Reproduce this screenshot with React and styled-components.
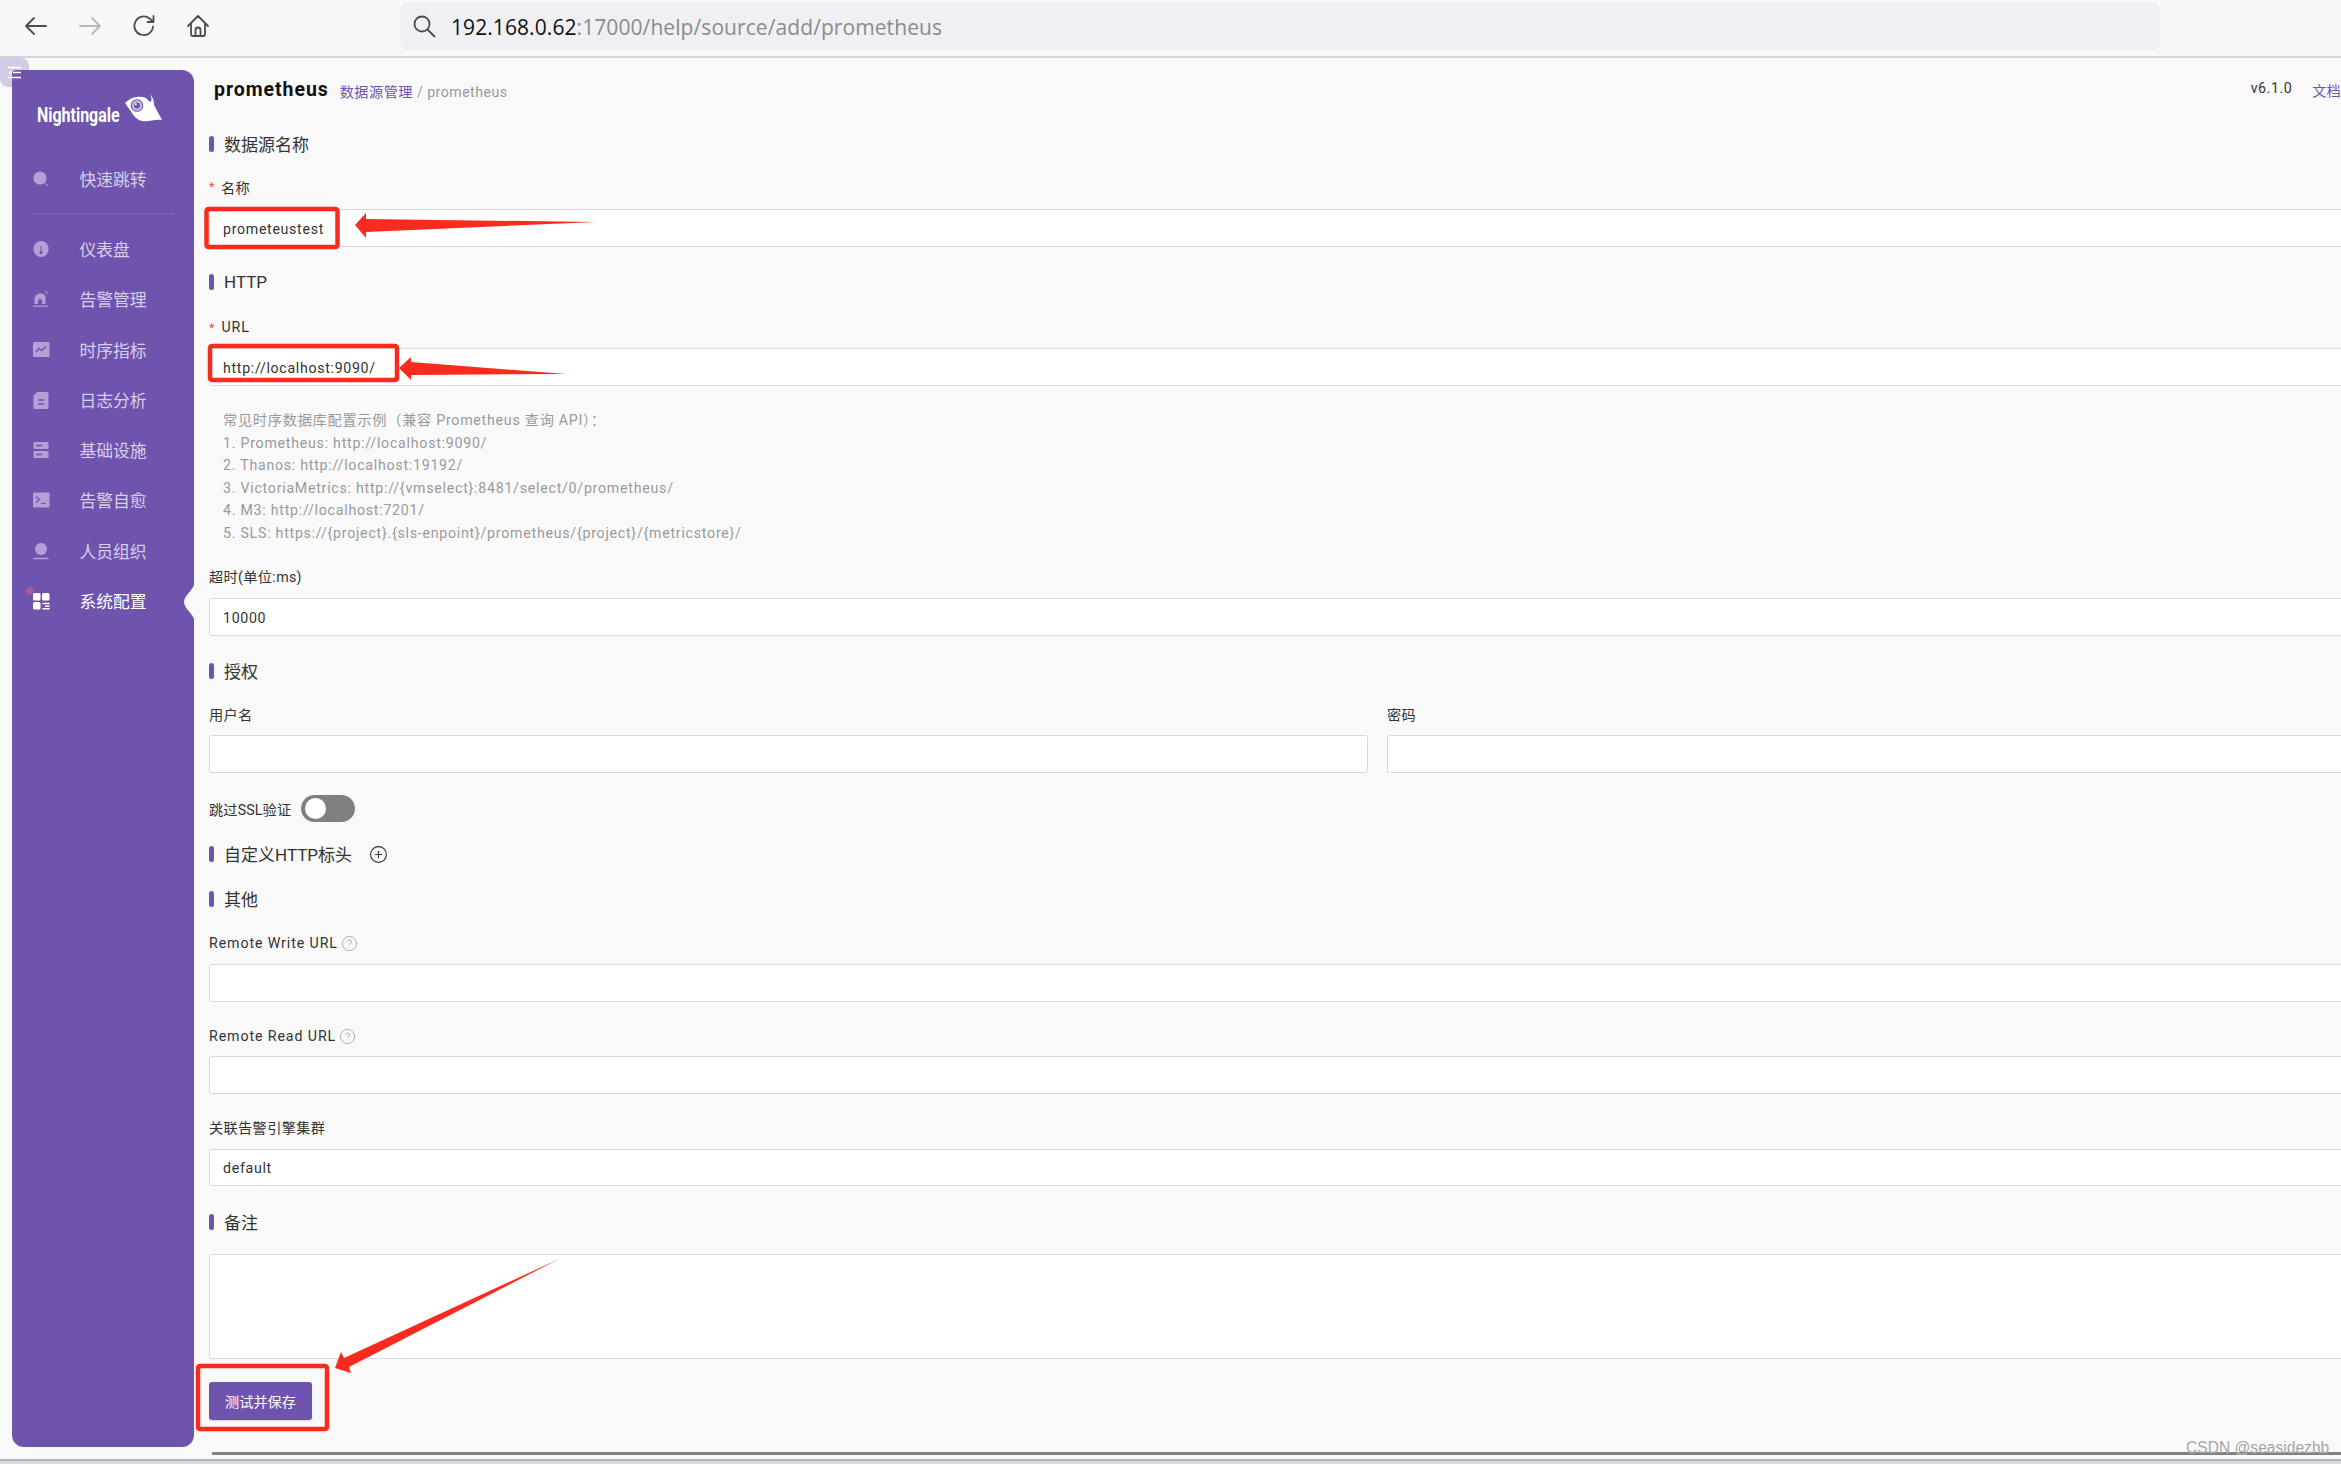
import React from "react";
import styled, { createGlobalStyle } from "styled-components";
import { CirclePlus, CircleHelp } from "lucide-react";

const Global = createGlobalStyle`
  html, body { margin: 0; padding: 0; background: #f9f9f9; }
  * { box-sizing: border-box; }
  body { font-family: Roboto, "Noto Sans CJK SC", sans-serif; color: #333; }
`;

const Page = styled.div`
  position: relative; width: 2341px; height: 1464px; overflow: hidden; background: #f9f9f9;
`;
const BrowserBar = styled.header`
  display: flex; align-items: center; height: 58px; padding: 0 0 4px 24px; gap: 30px;
  background: #f8f8fb; border-bottom: 2px solid #d4d3d8;
`;
const NavIcon = styled.svg`
  width: 24px; height: 24px; fill: none; stroke: ${p => p.$off ? "#b9b9bd" : "#4c4c50"}; stroke-width: 1.8;
  stroke-linecap: round; stroke-linejoin: round; flex: none;
`;
const UrlBar = styled.div`
  display: flex; align-items: center; gap: 15px; margin-left: 160px; width: 1760px; height: 48px; padding-left: 12px;
  background: #f0f0f4; border-radius: 8px; font: 400 21px "Open Sans", "Noto Sans", sans-serif; letter-spacing: .08px; color: #8a8a8e;
`;
const UrlHost = styled.span` color: #111; `;
const UrlText = styled.span` padding-top: 2px; `;
const Body = styled.div`
  position: relative; display: flex; height: 1401px; align-items: flex-start; background: #f9f9f9;
`;
const CollapseTab = styled.div`
  position: absolute; left: 0; top: 0; width: 29px; height: 29px; background: #d3cbe6; border-radius: 0 8px 8px 8px;
`;
const CollapseIcon = styled.svg`
  position: absolute; left: 7px; top: 8px; width: 15px; height: 13px; z-index: 3; stroke: #fff; stroke-width: 1.6; fill: none;
`;
const Sidebar = styled.nav`
  position: relative; z-index: 1; flex: none; width: 182px; height: 1377px; margin: 12px 15px 0 12px;
  background: #6f54ae; border-radius: 0 12px 12px 12px; border-top-left-radius: 4px;
`;
const Logo = styled.div`
  position: relative; display: flex; height: 84px; padding: 32px 0 0 25px;
`;
const LogoText = styled.span`
  font: 700 21px/26px Roboto, sans-serif; color: #fff; transform: scaleX(.76); transform-origin: left center; white-space: nowrap;
`;
const LogoMark = styled.svg`
  position: absolute; left: 113px; top: 24px; width: 38px; height: 30px; overflow: visible;
`;
const MenuRow = styled.div`
  display: flex; align-items: center; height: 50.3px; padding-left: 20px; gap: 29.5px;
  font-size: 16.8px; color: ${p => p.$active ? "#fff" : "#d8d0e8"};
`;
const MenuIcon = styled.svg`
  width: 18px; height: 18px; flex: none; fill: ${p => p.$active ? "#fff" : "#b3a0d6"}; 
`;
const Divider = styled.div`
  height: 1px; margin: 9px 19px 9.5px; background: #7e63c4;
`;
const ActiveDot = styled.span`
  position: absolute; left: 14px; top: 517px; width: 8px; height: 8px; border-radius: 50%; background: #a9599a;
`;
const Notch = styled.svg`
  position: absolute; right: 0; top: 515px; width: 10px; height: 34px; fill: #f9f9f9;
`;
const Main = styled.main`
  flex: 1; min-width: 0; height: 100%; overflow: hidden;
`;
const Header = styled.div`
  position: relative; display: flex; align-items: center; width: 2132px; height: 64px; padding: 0 0 1px 5px;
`;
const Title = styled.h1`
  margin: 0 11px 0 0; font: 700 19.5px Roboto, sans-serif; color: #111; letter-spacing: .95px;
`;
const Crumb = styled.span`
  font-size: 14.2px; color: #999; letter-spacing: .45px; padding-top: 2px;
`;
const CrumbLink = styled.span` color: #6f54ae; `;
const HeaderRight = styled.div`
  margin-left: auto; display: flex; gap: 20px; font-size: 14.2px; color: #333; letter-spacing: .55px; white-space: nowrap;
`;
const DocLink = styled.span` color: #6f54ae; letter-spacing: .2px; `;
const Form = styled.div` width: 2300px; `;
const Section = styled.h2`
  display: flex; align-items: center; gap: 10px; height: 26px; margin: ${p => p.$top}px 0 0;
  padding-bottom: ${p => p.$latin ? 0 : 2}px;
  font: 400 17px Roboto, "Noto Sans CJK SC", sans-serif; color: #333; letter-spacing: 0;
  &::before { content: ""; width: 5px; height: 16px; border-radius: 3px; background: #6f54ae; transform: translateY(${p => p.$latin ? 0 : 1}px); }
`;
const Label = styled.label`
  display: flex; align-items: center; height: 20px; margin-top: ${p => p.$top}px;
  padding-bottom: ${p => p.$latin ? 0 : 3}px;
  font-size: 14.2px; color: #333; letter-spacing: ${p => p.$latin ? ".9px" : ".35px"};
`;
const Star = styled.span` color: #ff4d4f; margin-right: 6px; font-size: 13px; `;
const Help = styled(CircleHelp)` margin-left: 3px; color: #999; `;
const TextBox = styled.div`
  display: flex; align-items: center; height: ${p => p.$h || 38}px; margin-top: ${p => p.$top}px; padding: 1px 13px 0;
  background: #fff; border: 1px solid #d9d9d9; border-radius: 3px;
  font-size: 14.2px; color: #333; letter-spacing: .68px;
`;
const Hint = styled.div`
  margin-top: 23px; padding-left: 14px; font-size: 14.2px; line-height: 22.5px; color: #999; letter-spacing: .74px;
`;
const HintLine = styled.div` white-space: nowrap; `;
const TwoCols = styled.div`
  display: grid; grid-template-columns: 1159px 1fr; column-gap: 19px;
`;
const SwitchRow = styled.div`
  display: flex; align-items: center; gap: 10px; margin-top: 22px; height: 27px; font-size: 14.2px; letter-spacing: .15px; color: #333;
`;
const SwitchTrack = styled.span`
  position: relative; width: 54px; height: 27px; border-radius: 14px; background: #808080;
  &::after { content: ""; position: absolute; left: 4px; top: 3px; width: 21px; height: 21px; border-radius: 50%; background: #fff; }
`;
const AddIcon = styled(CirclePlus)` margin-left: 7px; color: #333; transform: translateY(1px); `;
const SaveButton = styled.button`
  display: block; width: 103px; height: 38px; margin-top: 23px; border: 0; border-radius: 3px;
  background: #6f54ae; color: #fff; font: 400 14.2px Roboto, "Noto Sans CJK SC", sans-serif; box-shadow: 0 1px 2px rgba(0,0,0,.15);
`;
const ScrollThumb = styled.div`
  height: 3px; margin: 32px 0 0 3px; background: #808080; width: 2300px;
`;
const BottomStrip = styled.div`
  height: 5px; background: linear-gradient(#b4b4b4 0 2px, #d3dadd 2px);
`;
const Annotations = styled.svg`
  position: absolute; left: 0; top: 0; width: 2341px; height: 1464px; z-index: 5; pointer-events: none;
`;
const Watermark = styled.div`
  position: absolute; left: 2186px; top: 1439px; z-index: 6; font: 400 15.6px "Liberation Sans", sans-serif; color: #a4a4a4;
  text-shadow: 0 0 1px #fff;
`;

const menu = [
  ["快速跳转", <><circle cx="8" cy="8" r="6.6" /><path d="M12.5 12.5l3.5 3.5" stroke="#b3a0d6" strokeWidth="1" /></>],
  "divider",
  ["仪表盘", <><path d="M9 1a7.6 8 0 0 1 7.6 8 7.6 8 0 0 1-15.2 0A7.6 8 0 0 1 9 1z" /><path d="M9 6v6" stroke="#6f54ae" strokeWidth="1" /><circle cx="9" cy="12.5" r="1.5" fill="#6f54ae" /></>],
  ["告警管理", <><path d="M2.5 14V9a6 6 0 0 1 11 -3V14h-3.5v-3a2 2 0 0 0-4 0v3z" /><path d="M1 16.2h15" stroke="#b3a0d6" strokeWidth="1.2" /><path d="M12.5 1a5 5 0 0 1 3.5 3" fill="none" stroke="#b3a0d6" /></>],
  ["时序指标", <><rect x="1" y="1" width="16.5" height="15" rx="1.2" /><path d="M4 11l3-3.5 2.5 2L14 5.5" fill="none" stroke="#6f54ae" strokeWidth="1.4" /></>],
  ["日志分析", <><path d="M5 1h10a1.5 1.5 0 0 1 1.5 1.5v14a1.5 1.5 0 0 1-1.5 1.5H3A1.5 1.5 0 0 1 1.500 16.500V5z" /><path d="M6 9h6M6 13h6" stroke="#6f54ae" strokeWidth="1.3" /></>],
  ["基础设施", <><rect x="1.500" y="1" width="15" height="7" rx="1" /><rect x="1.500" y="10" width="15" height="7" rx="1" /><path d="M4 4.500h6M4 13.500h6" stroke="#6f54ae" strokeWidth="1.300" /></>],
  ["告警自愈", <><rect x="1" y="1.500" width="16.500" height="15" rx="1" /><path d="M4 5.500l3.500 3-3.500 3M9 12.500h5" fill="none" stroke="#6f54ae" strokeWidth="1.200" /></>],
  ["人员组织", <><circle cx="9" cy="7" r="6" /><path d="M1.500 16.500h15" stroke="#b3a0d6" strokeWidth="1.500" /></>],
  ["系统配置", <><rect x="1" y="1" width="7.500" height="7.500" rx="1.500" /><rect x="10" y="1" width="7.500" height="7.500" rx="1.500" /><rect x="1" y="10" width="7.500" height="7.500" rx="1.500" /><path d="M10.500 10.700h7v1.600h-7zM13 13.500h4.500v1.600H13zM10.500 16h7v1.600h-7z" /></>, true],
];

const hints = [
  "1. Prometheus: http://localhost:9090/",
  "2. Thanos: http://localhost:19192/",
  "3. VictoriaMetrics: http://{vmselect}:8481/select/0/prometheus/",
  "4. M3: http://localhost:7201/",
  "5. SLS: https://{project}.{sls-enpoint}/prometheus/{project}/{metricstore}/",
];

export default function App() {
  return (
    <Page>
      <Global />
      <BrowserBar>
        <NavIcon viewBox="0 0 24 24"><path d="M2 12h20M10 4l-8 8 8 8" /></NavIcon>
        <NavIcon viewBox="0 0 24 24" $off><path d="M2 12h20M14 4l8 8-8 8" /></NavIcon>
        <NavIcon viewBox="0 0 24 24"><path d="M21 12.500A9.300 9.300 0 1 1 17.500 4.500L21 7.500M21.500 2v6h-6" /></NavIcon>
        <NavIcon viewBox="0 0 24 24"><path d="M2 12L12 2l10 10M5 9.500V20a2 2 0 0 0 2 2h10a2 2 0 0 0 2-2V9.500M9.500 22v-6a2.500 2.500 0 0 1 5 0v6" /></NavIcon>
        <UrlBar>
          <NavIcon viewBox="0 0 24 24"><circle cx="10" cy="10" r="7.500" /><path d="M15.500 15.500l7 7" /></NavIcon>
          <UrlText><UrlHost>192.168.0.62</UrlHost>:17000/help/source/add/prometheus</UrlText>
        </UrlBar>
      </BrowserBar>
      <Body>
        <CollapseTab />
        <CollapseIcon viewBox="0 0 15 13"><path d="M1 1.500h13M6 6.500h8M1 11.500h13" /><path d="M4.500 4.500L1.500 6.500l3 2z" fill="#fff" stroke="none" /></CollapseIcon>
        <Sidebar>
          <Logo>
            <LogoText>Nightingale</LogoText>
            <LogoMark viewBox="0 0 38 30">
              <path d="M0 9C4 5 8 3 12 3c4-.5 8 0 10 2l3 3c2-1 2-4 0-8 3 3 4 7 4 11l8 15c-7-1-13 2-20 1-5-1-8-5-10-8C5 16 2 12 0 9z" fill="#fff" />
              <circle cx="12" cy="11.500" r="7.500" fill="#fff" />
              <circle cx="12" cy="11.500" r="6.300" fill="#6f54ae" />
              <circle cx="12" cy="11.500" r="5.200" fill="#c9bce4" />
              <circle cx="12" cy="11.500" r="3" fill="#6f54ae" />
              <circle cx="10.800" cy="10.300" r="1" fill="#fff" />
            </LogoMark>
          </Logo>
          {menu.map((m, i) => m === "divider" ? <Divider key={i} /> : (
            <MenuRow key={i} $active={m[2]}>
              <MenuIcon viewBox="0 0 18 18" $active={m[2]}>{m[1]}</MenuIcon>
              <span>{m[0]}</span>
            </MenuRow>
          ))}
          <ActiveDot />
          <Notch viewBox="0 0 10 34"><path d="M10 0C8 6 0 11 0 17s8 11 10 17z" /></Notch>
        </Sidebar>
        <Main>
          <Header>
            <Title>prometheus</Title>
            <Crumb><CrumbLink>数据源管理</CrumbLink> / prometheus</Crumb>
            <HeaderRight><span>v6.1.0</span><DocLink>文档</DocLink></HeaderRight>
          </Header>
          <Form>
            <Section $top={9}>数据源名称</Section>
            <Label $top={21}><Star>*</Star>名称</Label>
            <TextBox $top={11}>prometeustest</TextBox>
            <Section $top={22} $latin>HTTP</Section>
            <Label $top={22} $latin><Star>*</Star>URL</Label>
            <TextBox $top={11}>http://localhost:9090/</TextBox>
            <Hint>
              <HintLine>常见时序数据库配置示例（兼容 Prometheus 查询 API）：</HintLine>
              {hints.map(h => <HintLine key={h}>{h}</HintLine>)}
            </Hint>
            <Label $top={23}>超时(单位:ms)</Label>
            <TextBox $top={11}>10000</TextBox>
            <Section $top={22}>授权</Section>
            <TwoCols>
              <div>
                <Label $top={21}>用户名</Label>
                <TextBox $top={10} />
              </div>
              <div>
                <Label $top={21}>密码</Label>
                <TextBox $top={10} />
              </div>
            </TwoCols>
            <SwitchRow>跳过SSL验证<SwitchTrack /></SwitchRow>
            <Section $top={19}>自定义HTTP标头<AddIcon size={19} strokeWidth={1.4} /></Section>
            <Section $top={19}>其他</Section>
            <Label $top={21} $latin>Remote Write URL<Help size={17} strokeWidth={1.1} /></Label>
            <TextBox $top={11} />
            <Label $top={24} $latin>Remote Read URL<Help size={17} strokeWidth={1.1} /></Label>
            <TextBox $top={10} />
            <Label $top={24}>关联告警引擎集群</Label>
            <TextBox $top={11} $h={37}>default</TextBox>
            <Section $top={23}>备注</Section>
            <TextBox $top={19} $h={105} />
            <SaveButton>测试并保存</SaveButton>
            <ScrollThumb />
          </Form>
        </Main>
      </Body>
      <BottomStrip />
      <Annotations viewBox="0 0 2341 1464">
        <g fill="none" stroke="#fb2a1f" strokeWidth="4.500">
          <rect x="206.500" y="209" width="131" height="38" rx="2" />
          <rect x="210" y="346" width="187" height="34" rx="2" />
          <rect x="198" y="1366" width="129" height="63" rx="2" />
        </g>
        <g fill="#fb2a1f">
          <polygon points="355,225 366,213 366,219 596,222 366,232 366,238" />
          <polygon points="399,368 411,357 411,362 566,374 411,375 411,380" />
          <polygon points="335,1368 341,1352 344,1358 559,1259 349,1367 351,1373" />
        </g>
      </Annotations>
      <Watermark>CSDN @seasidezhb</Watermark>
    </Page>
  );
}
